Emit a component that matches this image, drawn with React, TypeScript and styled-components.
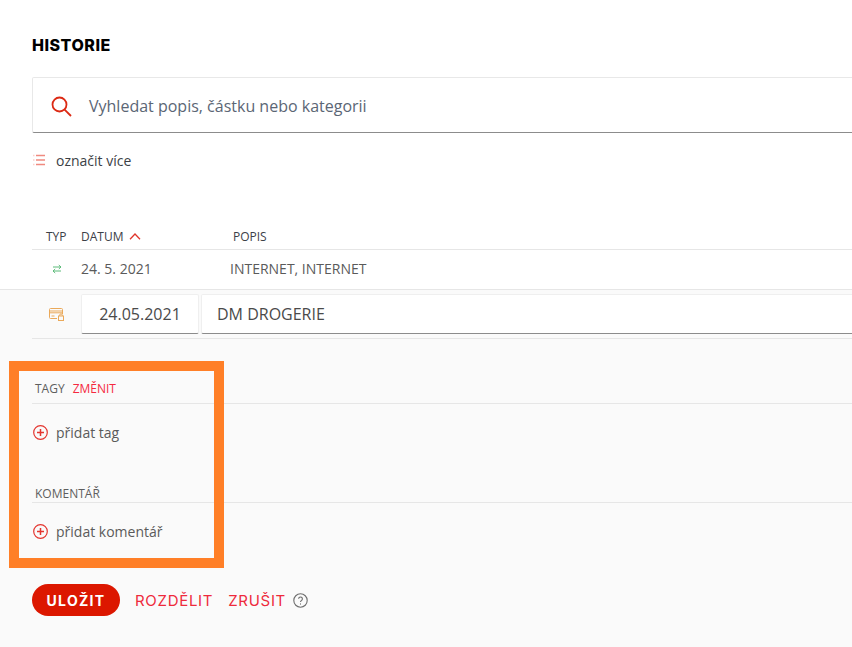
import React from 'react';
import styled, { createGlobalStyle } from 'styled-components';

const GlobalStyle = createGlobalStyle`
  html, body {
    margin: 0;
    padding: 0;
    background: #fff;
    overflow: hidden;
  }
  body {
    font-family: 'Open Sans', 'Liberation Sans', sans-serif;
    color: #4a4a4a;
  }
`;

const Page = styled.div`
  position: relative;
  width: 852px;
  height: 647px;
  overflow: hidden;
`;

const Top = styled.section`
  padding: 36px 0 0 32px;
  height: 221px;
  box-sizing: border-box;
`;

const Title = styled.h2`
  margin: 0 0 22px;
  font: 800 16px/19px Inter, 'Liberation Sans', sans-serif;
  letter-spacing: 0.5px;
  color: #000;
`;

const SearchBox = styled.div`
  display: flex;
  align-items: center;
  gap: 17px;
  width: 840px;
  height: 56px;
  box-sizing: border-box;
  padding: 2px 0 0 18px;
  border: 1px solid #e8e8e8;
  border-bottom: 1px solid #8c8c8c;
  border-radius: 2px;
`;

const SearchText = styled.span`
  font-size: 16px;
  color: #5b6675;
`;

const SelectMore = styled.div`
  display: flex;
  align-items: center;
  gap: 10px;
  margin-top: 17px;
  height: 20px;
  font-size: 14px;
  color: #3c3f46;
`;

const HeadRow = styled.div`
  display: flex;
  align-items: center;
  height: 29px;
  margin-left: 32px;
  padding-top: 3px;
  box-sizing: border-box;
  border-bottom: 1px solid #e6e6e6;
  font-size: 12px;
  color: #3c4048;
`;

const HeadCell = styled.span<{ $width: number; $pad?: number }>`
  display: inline-flex;
  align-items: center;
  gap: 6px;
  width: ${p => p.$width}px;
  padding-left: ${p => p.$pad ?? 0}px;
  box-sizing: border-box;
`;

const DataRow = styled.div`
  display: flex;
  align-items: center;
  height: 39px;
  margin-left: 32px;
  padding-bottom: 2px;
  box-sizing: border-box;
  font-size: 14px;
  color: #5a5a5a;
`;

const TypeCell = styled.span`
  display: flex;
  justify-content: center;
  width: 49px;
`;

const DateCell = styled.span`
  width: 149px;
`;

const Panel = styled.div`
  background: #fafafa;
  height: 358px;
  border-top: 1px solid #e6e6e6;
  box-sizing: border-box;
`;

const EditRow = styled.div`
  display: flex;
  align-items: center;
  height: 49px;
  margin-left: 32px;
  border-bottom: 1px solid #e6e6e6;
  box-sizing: border-box;
`;

const EditIconCell = styled.span`
  display: flex;
  flex: none;
  justify-content: center;
  width: 49px;
`;

const Fields = styled.div`
  display: flex;
  flex: none;
  gap: 2px;
`;

const Field = styled.div<{ $width: number; $center?: boolean }>`
  display: flex;
  align-items: center;
  justify-content: ${p => (p.$center ? 'center' : 'flex-start')};
  width: ${p => p.$width}px;
  height: 40px;
  box-sizing: border-box;
  padding-left: ${p => (p.$center ? 0 : 15)}px;
  background: #fff;
  border: 1px solid #efefef;
  border-bottom: 1px solid #8c8c8c;
  border-radius: 2px;
  font-size: 16px;
  color: #4a4a4a;
`;

const Group = styled.div<{ $top: number }>`
  margin: ${p => p.$top}px 0 0 32px;
`;

const GroupHead = styled.div<{ $tight?: boolean }>`
  display: flex;
  gap: 8px;
  align-items: center;
  height: ${p => (p.$tight ? 14 : 18)}px;
  padding: 0 0 ${p => (p.$tight ? 2 : 6)}px 3px;
  border-bottom: 1px solid #e6e6e6;
  font-size: 12px;
  color: #5e5e5e;
`;

const ChangeLink = styled.span`
  color: #f5293f;
`;

const AddRow = styled.div`
  display: flex;
  align-items: center;
  gap: 8px;
  height: 20px;
  margin-top: 18px;
  padding-left: 1px;
  font-size: 14px;
  color: #5a5a5a;
`;

const Actions = styled.div`
  display: flex;
  align-items: center;
  height: 32px;
  margin: 43px 0 0 32px;
`;

const SaveButton = styled.button`
  width: 88px;
  height: 32px;
  padding: 0;
  border: 0;
  border-radius: 16px;
  background: #dc1700;
  color: #fff;
  font: 700 14px Inter, 'Liberation Sans', sans-serif;
  letter-spacing: 1.3px;
`;

const ActionLink = styled.span<{ $left: number }>`
  margin-left: ${p => p.$left}px;
  font: 400 15px Inter, 'Liberation Sans', sans-serif;
  letter-spacing: 0.7px;
  color: #ee2a3c;
`;

const HelpIcon = styled.span`
  display: flex;
  margin-left: 7px;
`;

// orange annotation frame lying over the screenshot
const Highlight = styled.div`
  position: absolute;
  left: 9px;
  top: 361px;
  width: 215px;
  height: 207px;
  box-sizing: border-box;
  border: 10px solid #ff7f27;
  pointer-events: none;
`;

const SearchIcon = () => (
  <svg width="21" height="21" viewBox="0 0 21 21" fill="none" stroke="#dc2a14" strokeWidth="1.8">
    <circle cx="8.5" cy="8.5" r="7" />
    <path d="M13.6 13.6 20 20" />
  </svg>
);

const ListIcon = () => (
  <svg width="14" height="12" viewBox="0 0 14 12" stroke="#f08a80" strokeWidth="1.4" fill="none">
    <path d="M4 1.5h9M4 6h9M4 10.5h9" />
    <path d="M1 1.5h1.5M1 6h1.5M1 10.5h1.5" stroke="#fad0cb" />
  </svg>
);

const SortUpIcon = () => (
  <svg width="12" height="7" viewBox="0 0 12 7" fill="none" stroke="#e0352b" strokeWidth="1.3">
    <path d="M1 6.2 6 1l5 5.2" />
  </svg>
);

const TransferIcon = () => (
  <svg width="10" height="10" viewBox="0 0 10 10" fill="none" stroke="#5dbb7a" strokeWidth="1">
    <path d="M1 3h8M6.8 1 9 3 6.8 5M9 7H1M3.2 5 1 7l2.2 2" />
  </svg>
);

const CardIcon = () => (
  <svg width="15" height="13" viewBox="0 0 15 13" fill="none" stroke="#eaa95a" strokeWidth="1">
    <path d="M8 10.5H1.5a1 1 0 0 1-1-1v-8a1 1 0 0 1 1-1h11a1 1 0 0 1 1 1V6" />
    <path d="M.5 3h13M.5 4.8h13" />
    <path d="M2.5 8h3" />
    <rect x="9.5" y="8" width="5" height="4.5" />
    <path d="M10.8 8V7a1.2 1.2 0 0 1 2.4 0v1" />
  </svg>
);

const PlusCircleIcon = () => (
  <svg width="15" height="15" viewBox="0 0 15 15" fill="none" stroke="#e4352f" strokeWidth="1.2">
    <circle cx="7.5" cy="7.5" r="6.8" />
    <path d="M7.5 4v7M4 7.5h7" strokeWidth="1.5" />
  </svg>
);

const QuestionIcon = () => (
  <svg width="15" height="15" viewBox="0 0 15 15" fill="none" stroke="#6e6e6e" strokeWidth="1.1">
    <circle cx="7.5" cy="7.5" r="6.7" />
    <path d="M5.6 5.8a1.9 1.9 0 1 1 2.9 1.7c-.7.4-1 .8-1 1.6" />
    <path d="M7.5 10.4v1.2" />
  </svg>
);

export default function App() {
  return (
    <Page>
      <GlobalStyle />
      <Top>
        <Title>HISTORIE</Title>
        <SearchBox>
          <SearchIcon />
          <SearchText>Vyhledat popis, částku nebo kategorii</SearchText>
        </SearchBox>
        <SelectMore>
          <ListIcon />
          označit více
        </SelectMore>
      </Top>
      <HeadRow>
        <HeadCell $width={49} $pad={14}>TYP</HeadCell>
        <HeadCell $width={152}>
          DATUM <SortUpIcon />
        </HeadCell>
        <HeadCell $width={200}>POPIS</HeadCell>
      </HeadRow>
      <DataRow>
        <TypeCell>
          <TransferIcon />
        </TypeCell>
        <DateCell>24. 5. 2021</DateCell>
        <span>INTERNET, INTERNET</span>
      </DataRow>
      <Panel>
        <EditRow>
          <EditIconCell>
            <CardIcon />
          </EditIconCell>
          <Fields>
            <Field $width={118} $center>24.05.2021</Field>
            <Field $width={660}>DM DROGERIE</Field>
          </Fields>
        </EditRow>
        <Group $top={40}>
          <GroupHead>
            TAGY <ChangeLink>ZMĚNIT</ChangeLink>
          </GroupHead>
          <AddRow>
            <PlusCircleIcon />
            přidat tag
          </AddRow>
        </Group>
        <Group $top={44}>
          <GroupHead $tight>KOMENTÁŘ</GroupHead>
          <AddRow>
            <PlusCircleIcon />
            přidat komentář
          </AddRow>
        </Group>
        <Actions>
          <SaveButton>ULOŽIT</SaveButton>
          <ActionLink $left={15}>ROZDĚLIT</ActionLink>
          <ActionLink $left={15}>ZRUŠIT</ActionLink>
          <HelpIcon>
            <QuestionIcon />
          </HelpIcon>
        </Actions>
      </Panel>
      <Highlight />
    </Page>
  );
}
